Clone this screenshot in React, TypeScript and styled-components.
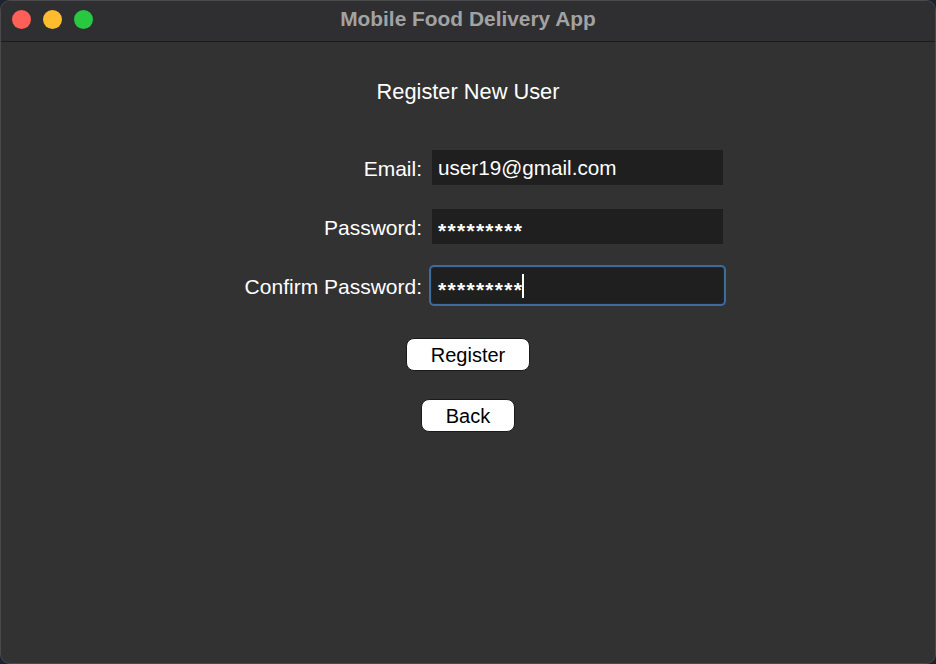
import React from "react";
import styled, { createGlobalStyle } from "styled-components";

const Global = createGlobalStyle`
  html, body {
    margin: 0;
    padding: 0;
    background: #1d2330;
  }
  body {
    font-family: "Liberation Sans", Arial, sans-serif;
  }
  #root {
    width: 936px;
    height: 664px;
  }
`;

const Window = styled.div`
  box-sizing: border-box;
  width: 936px;
  height: 664px;
  border-radius: 10px;
  overflow: hidden;
  background: #323232;
  border: 1px solid #4a4a4c;
  display: flex;
  flex-direction: column;
`;

const TitleBar = styled.div`
  height: 40px;
  flex: none;
  background: #2f2f31;
  border-bottom: 1px solid #1a1a1a;
  display: grid;
  grid-template-columns: 1fr auto 1fr;
  align-items: center;
`;

const Lights = styled.div`
  display: flex;
  gap: 12px;
  padding-left: 11px;
  padding-bottom: 4px;
`;

const Light = styled.span<{ $color: string }>`
  flex: none;
  width: 19px;
  height: 19px;
  border-radius: 50%;
  background: ${(p) => p.$color};
`;

const Title = styled.div`
  font-weight: bold;
  font-size: 20.9px;
  color: #a2a2a4;
  padding-bottom: 4px;
`;

const Body = styled.div`
  flex: 1;
  display: flex;
  flex-direction: column;
  align-items: center;
  padding-top: 37px;
`;

const Heading = styled.div`
  font-size: 21.8px;
  color: #ffffff;
  line-height: 26px;
  height: 26px;
`;

const Form = styled.div`
  margin-top: 45px;
  margin-left: 19px;
  display: grid;
  grid-template-columns: 190px 291px;
  column-gap: 10px;
  row-gap: 24px;
  align-items: center;
`;

const Label = styled.div`
  font-size: 21px;
  color: #ffffff;
  text-align: right;
  padding-top: 2px;
  white-space: nowrap;
`;

const Entry = styled.div<{ $focused?: boolean }>`
  box-sizing: border-box;
  height: 35px;
  background: #1f1f1f;
  color: #ffffff;
  font-size: 20.7px;
  padding-left: 6px;
  display: flex;
  align-items: center;
  border-radius: ${(p) => (p.$focused ? "2px" : "0")};
  box-shadow: ${(p) =>
    p.$focused ? "0 0 0 1px #1c2838, 0 0 0 3px #3f6b9c" : "none"};
`;

const Stars = styled.span`
  font-size: 21px;
  font-weight: bold;
  letter-spacing: 1.3px;
  line-height: 1;
  padding-top: 8px;
`;

const Caret = styled.span`
  width: 2px;
  height: 24px;
  background: #ffffff;
  margin-left: -1px;
`;

const Buttons = styled.div`
  display: flex;
  flex-direction: column;
  align-items: center;
  gap: 28px;
  margin-top: 35px;
`;

const Button = styled.button`
  box-sizing: border-box;
  height: 33px;
  padding: 0 24px;
  background: #ffffff;
  color: #000000;
  border: 1px solid #1a1a1a;
  border-radius: 8px;
  font-family: "Liberation Sans", Arial, sans-serif;
  font-size: 20px;
  line-height: 1;
  cursor: pointer;
`;

export default function App() {
  return (
    <>
      <Global />
      <Window>
        <TitleBar>
          <Lights>
            <Light $color="#fe5f57" />
            <Light $color="#febc2e" />
            <Light $color="#28c840" />
          </Lights>
          <Title>Mobile Food Delivery App</Title>
          <div />
        </TitleBar>
        <Body>
          <Heading>Register New User</Heading>
          <Form>
            <Label>Email:</Label>
            <Entry>user19@gmail.com</Entry>
            <Label>Password:</Label>
            <Entry>
              <Stars>*********</Stars>
            </Entry>
            <Label>Confirm Password:</Label>
            <Entry $focused>
              <Stars>*********</Stars>
              <Caret />
            </Entry>
          </Form>
          <Buttons>
            <Button>Register</Button>
            <Button>Back</Button>
          </Buttons>
        </Body>
      </Window>
    </>
  );
}
